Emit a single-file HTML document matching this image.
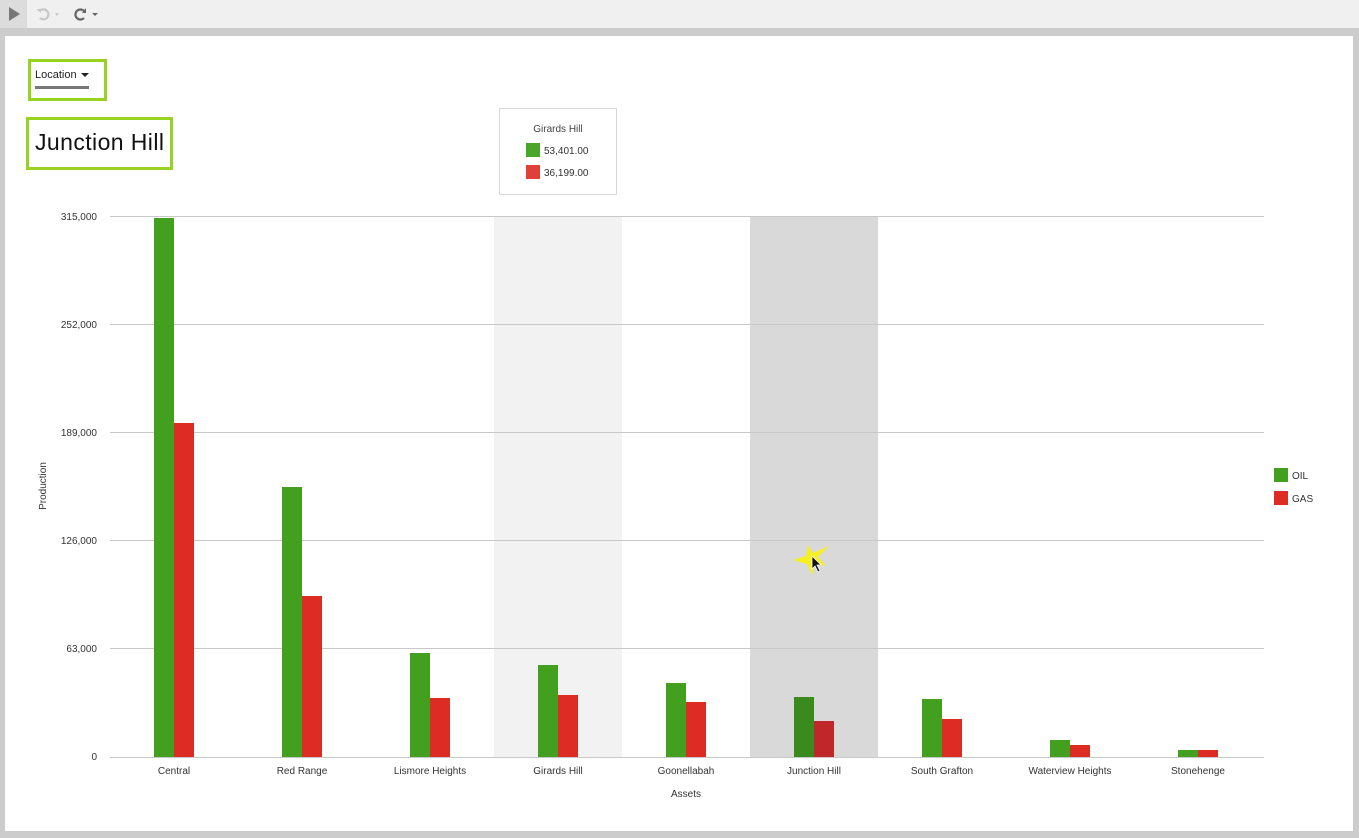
<!DOCTYPE html>
<html><head><meta charset="utf-8"><style>
body{margin:0;width:1359px;height:838px;background:#cfcfcf;font-family:"Liberation Sans",sans-serif;position:relative;overflow:hidden}
</style></head><body>
<svg width="1359" height="838" style="position:absolute;left:0;top:0" font-family="Liberation Sans, sans-serif">
<rect x="0" y="0" width="1359" height="28" fill="#f0f0f0"/>
<rect x="0" y="0" width="27" height="28" fill="#dcdcdc"/>
<path d="M9 7 L20 14 L9 21 Z" fill="#777"/>
<path d="M41 10 a5 5 0 1 1 -1 8" stroke="#c8c8c8" stroke-width="2.2" fill="none"/><path d="M36 9 l5 0 l0 4 z" fill="#c8c8c8"/>
<path d="M55 13 l4 0 l-2 3 z" fill="#c8c8c8"/>
<path d="M84 11 a5 5 0 1 0 0 7" stroke="#666" stroke-width="2.2" fill="none"/><path d="M86 8 l0 5 l-4 0 z" fill="#666"/>
<path d="M92 13 l6 0 l-3 3 z" fill="#666"/>
<rect x="0" y="28" width="1359" height="810" fill="#cccccc"/>
<rect x="5" y="36" width="1348" height="795" fill="#fff"/>
<rect x="29.5" y="60.5" width="76" height="39" fill="none" stroke="#97d320" stroke-width="3"/>
<text x="35" y="78" font-size="11" fill="#222">Location</text>
<path d="M81 73 l8 0 l-4 4 z" fill="#222"/>
<rect x="35" y="86" width="54" height="3" fill="#777"/>
<rect x="27.5" y="118.5" width="144" height="50" fill="none" stroke="#97d320" stroke-width="3"/>
<text x="35" y="150" font-size="23" fill="#111" textLength="129" lengthAdjust="spacing">Junction Hill</text>
<rect x="494" y="216" width="128" height="541" fill="#f2f2f2"/>
<rect x="750" y="216" width="128" height="541" fill="#d9d9d9"/>
<g stroke="#c8c8c8" stroke-width="1">
<line x1="110" y1="216.5" x2="1264" y2="216.5"/><line x1="110" y1="324.5" x2="1264" y2="324.5"/>
<line x1="110" y1="432.5" x2="1264" y2="432.5"/><line x1="110" y1="540.5" x2="1264" y2="540.5"/>
<line x1="110" y1="648.5" x2="1264" y2="648.5"/><line x1="110" y1="757.5" x2="1264" y2="757.5"/>
</g>
<g font-size="10" fill="#333" text-anchor="end">
<text x="97" y="220">315,000</text><text x="97" y="328">252,000</text><text x="97" y="436">189,000</text>
<text x="97" y="544">126,000</text><text x="97" y="652">63,000</text><text x="97" y="760">0</text>
</g>
<text transform="translate(46,486) rotate(-90)" font-size="10" fill="#333" text-anchor="middle">Production</text>
<g fill="#42a01e">
<rect x="154" y="218" width="20" height="539"/><rect x="282" y="487" width="20" height="270"/>
<rect x="410" y="653" width="20" height="104"/><rect x="538" y="665" width="20" height="92"/>
<rect x="666" y="683" width="20" height="74"/><rect x="794" y="697" width="20" height="60" fill="#3a8a1e"/>
<rect x="922" y="699" width="20" height="58"/><rect x="1050" y="740" width="20" height="17"/>
<rect x="1178" y="750" width="20" height="7"/>
</g>
<g fill="#dd2c24">
<rect x="174" y="423" width="20" height="334"/><rect x="302" y="596" width="20" height="161"/>
<rect x="430" y="698" width="20" height="59"/><rect x="558" y="695" width="20" height="62"/>
<rect x="686" y="702" width="20" height="55"/><rect x="814" y="721" width="20" height="36" fill="#c0272a"/>
<rect x="942" y="719" width="20" height="38"/><rect x="1070" y="745" width="20" height="12"/>
<rect x="1198" y="750" width="20" height="7"/>
</g>
<g font-size="10" fill="#333" text-anchor="middle">
<text x="174" y="774">Central</text><text x="302" y="774">Red Range</text><text x="430" y="774">Lismore Heights</text>
<text x="558" y="774">Girards Hill</text><text x="686" y="774">Goonellabah</text><text x="814" y="774">Junction Hill</text>
<text x="942" y="774">South Grafton</text><text x="1070" y="774">Waterview Heights</text><text x="1198" y="774">Stonehenge</text>
<text x="686" y="797">Assets</text>
</g>
<rect x="1274" y="468" width="14" height="14" fill="#42a01e"/><text x="1292" y="479" font-size="10" fill="#333">OIL</text>
<rect x="1274" y="491" width="14" height="14" fill="#dd2c24"/><text x="1292" y="502" font-size="10" fill="#333">GAS</text>
<rect x="499.5" y="108.5" width="117" height="86" fill="#fff" stroke="#d8d8d8"/>
<text x="558" y="132" font-size="10" fill="#444" text-anchor="middle">Girards Hill</text>
<rect x="526" y="143" width="14" height="14" fill="#4aa62a"/><text x="544" y="154" font-size="10" fill="#333">53,401.00</text>
<rect x="526" y="165" width="14" height="14" fill="#e0403a"/><text x="544" y="176" font-size="10" fill="#333">36,199.00</text>
<path d="M793 560 L806 556 L808 545 L813 553 L829 546 L818 557 L826 566 L815 564 L812 575 L807 564 Z" fill="#f6f020"/>
<path d="M812 556 L812 569 L815 566 L818 572 L820 571 L817 565 L821 565 Z" fill="#111" stroke="#fff" stroke-width="0.8"/>
</svg>
</body></html>
